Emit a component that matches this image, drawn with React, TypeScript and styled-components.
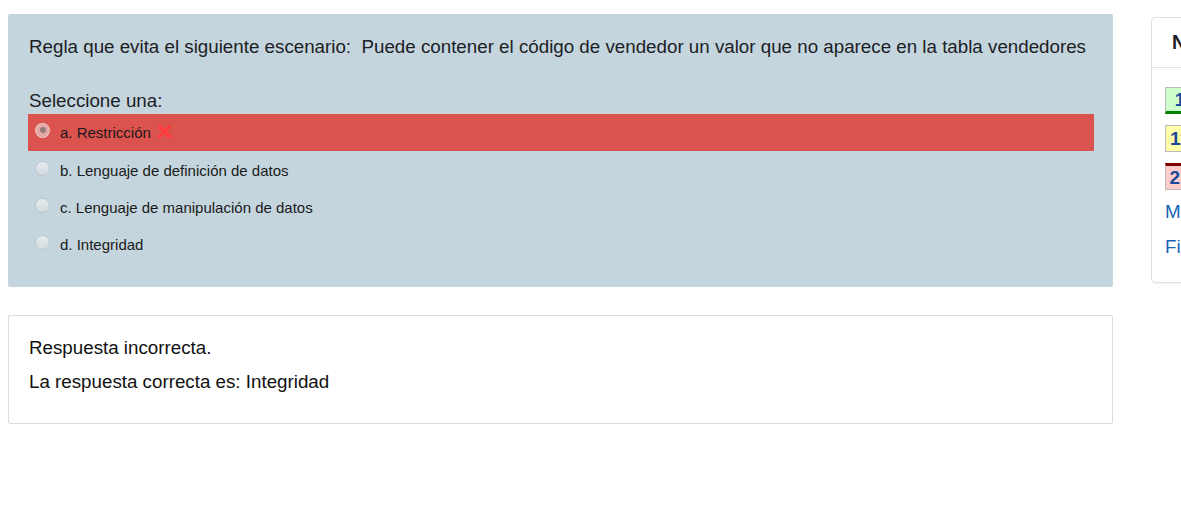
import React from "react";
import styled, { createGlobalStyle } from "styled-components";

const Global = createGlobalStyle`
  html, body { margin: 0; padding: 0; overflow: hidden; background: #fff; }
  body { font-family: "Liberation Sans", Arial, sans-serif; color: #1d2125; }
`;

const Page = styled.div`
  display: flex;
  align-items: flex-start;
  padding-left: 8px;
  width: 1500px;
`;

const MainColumn = styled.div`
  width: 1105px;
  margin-top: 14px;
  display: flex;
  flex-direction: column;
  gap: 28px;
`;

const QuestionCard = styled.div`
  background: #c4d5de;
  border-radius: 2px;
  padding: 19px 19px 25px 20px;
`;

const QuestionText = styled.p`
  margin: 0 0 27px 1px;
  font-size: 18.75px;
  line-height: 28px;
  white-space: pre;
`;

const Prompt = styled.div`
  margin-left: 1px;
  font-size: 18.75px;
  line-height: 26px;
`;

const AnswerList = styled.div`
  display: flex;
  flex-direction: column;
`;

const AnswerRow = styled.div<{ $wrong?: boolean }>`
  box-sizing: border-box;
  display: flex;
  align-items: center;
  height: 37px;
  padding-left: 7px;
  background: ${(p) => (p.$wrong ? "#db534f" : "transparent")};
  font-size: 15px;
  color: #1a1a1a;
  & + & {
    padding-top: 2px;
  }
`;

const Radio = styled.span<{ $checked?: boolean }>`
  position: relative;
  width: 13px;
  height: 13px;
  border-radius: 50%;
  border: 1px solid ${(p) => (p.$checked ? "rgba(255,255,255,0.35)" : "#bcc7cd")};
  background: ${(p) =>
    p.$checked
      ? "rgba(235,235,235,0.55)"
      : "linear-gradient(#e6ebee, #d3dbe0)"};
  margin-right: 10px;
  margin-top: -5px;
  flex: none;
  &::after {
    content: "";
    display: ${(p) => (p.$checked ? "block" : "none")};
    position: absolute;
    left: 3.5px;
    top: 3.5px;
    width: 6px;
    height: 6px;
    border-radius: 50%;
    background: rgba(120, 110, 110, 0.75);
  }
`;

const Label = styled.span`
  display: flex;
  align-items: center;
  gap: 6px;
`;

const WrongMark = styled.svg`
  width: 15px;
  height: 15px;
  margin-top: -2px;
`;

const FeedbackCard = styled.div`
  border: 1px solid #dcdcdc;
  border-radius: 2px;
  padding: 18px 20px 21px;
  background: #fff;
`;

const FeedbackLine = styled.p`
  margin: 0 0 6px;
  font-size: 18.75px;
  line-height: 28px;
  color: #111;
`;

const NavPanel = styled.div`
  margin-top: 17px;
  margin-left: 38px;
  width: 320px;
  height: 264px;
  border: 1px solid #e0e0e0;
  border-radius: 4px;
  box-shadow: 0 1px 1px rgba(0, 0, 0, 0.04);
  display: flex;
  flex-direction: column;
`;

const NavHeader = styled.div`
  height: 49px;
  border-bottom: 1px solid #e3e3e3;
  padding: 0 20px;
  display: flex;
  align-items: center;
  font-size: 19.5px;
  font-weight: bold;
  color: #1d2125;
  white-space: nowrap;
`;

const NavBody = styled.div`
  padding: 19px 13px 0;
  display: flex;
  flex-direction: column;
`;

const ButtonGrid = styled.div`
  display: grid;
  grid-template-columns: repeat(10, 30px);
  column-gap: 8px;
  row-gap: 11px;
`;

const statusStyles: Record<string, string> = {
  correct: "background:#ccffcc; border-bottom:3px solid #008000;",
  partial: "background:#ffffaa;",
  incorrect: "background:#ffcccc; border-top:3px solid #800000;",
};

const QButton = styled.span<{ $status: string }>`
  box-sizing: border-box;
  height: 27px;
  border: 1px solid #bbb;
  display: flex;
  align-items: center;
  justify-content: center;
  font-size: 19px;
  font-weight: bold;
  color: #174a9c;
  ${(p) => statusStyles[p.$status]}
`;

const NavLink = styled.a`
  display: block;
  margin-top: 9px;
  font-size: 18.75px;
  line-height: 26px;
  color: #1a64b5;
  text-decoration: none;
  white-space: nowrap;
  & + & {
    margin-top: 9px;
  }
`;

const answers = [
  { key: "a", text: "Restricción", checked: true },
  { key: "b", text: "Lenguaje de definición de datos" },
  { key: "c", text: "Lenguaje de manipulación de datos" },
  { key: "d", text: "Integridad" },
];

const statuses = ["correct", "partial", "incorrect"];

export default function App() {
  const buttons = Array.from({ length: 21 }, (_, i) => i + 1);
  return (
    <>
      <Global />
      <Page>
        <MainColumn>
          <QuestionCard>
            <QuestionText>
              {"Regla que evita el siguiente escenario:  Puede contener el código de vendedor un valor que no aparece en la tabla vendedores"}
            </QuestionText>
            <Prompt>Seleccione una:</Prompt>
            <AnswerList>
              {answers.map((a) => (
                <AnswerRow key={a.key} $wrong={a.checked}>
                  <Radio $checked={a.checked} />
                  <Label>
                    {a.key}. {a.text}
                    {a.checked && (
                      <WrongMark viewBox="0 0 16 16">
                        <path
                          d="M2.5 2.5 L13.5 13.5 M13.5 2.5 L2.5 13.5"
                          stroke="#ff3b3b"
                          strokeWidth="3.2"
                          strokeLinecap="round"
                        />
                      </WrongMark>
                    )}
                  </Label>
                </AnswerRow>
              ))}
            </AnswerList>
          </QuestionCard>
          <FeedbackCard>
            <FeedbackLine>Respuesta incorrecta.</FeedbackLine>
            <FeedbackLine>La respuesta correcta es: Integridad</FeedbackLine>
          </FeedbackCard>
        </MainColumn>
        <NavPanel>
          <NavHeader>Navegación por el cuestionario</NavHeader>
          <NavBody>
            <ButtonGrid>
              {buttons.map((n) => (
                <QButton key={n} $status={statuses[Math.floor((n - 1) / 10)]}>
                  {n}
                </QButton>
              ))}
            </ButtonGrid>
            <NavLink href="#">Mostrar una página cada vez</NavLink>
            <NavLink href="#">Finalizar revisión</NavLink>
          </NavBody>
        </NavPanel>
      </Page>
    </>
  );
}
